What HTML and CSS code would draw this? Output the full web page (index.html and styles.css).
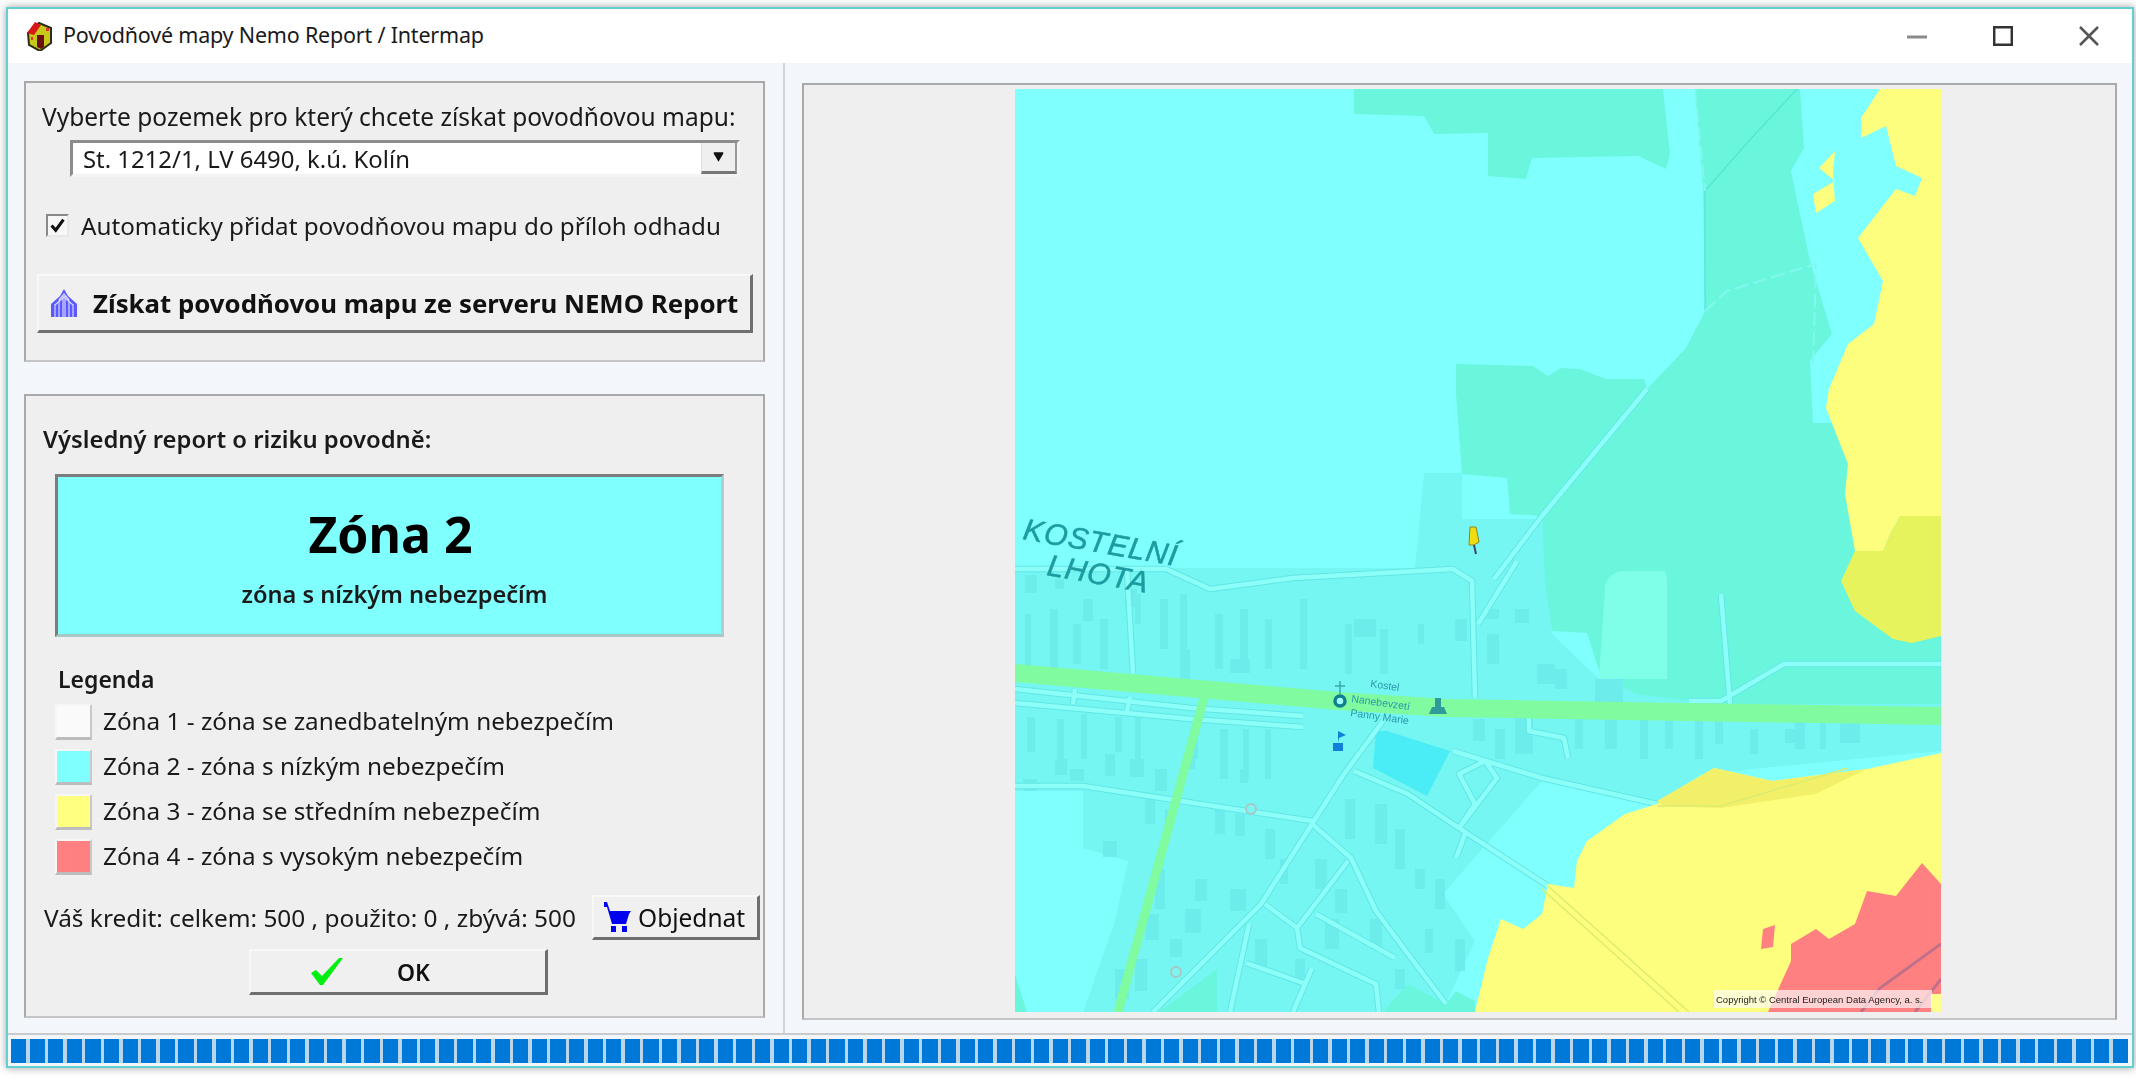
FILE: index.html
```html
<!DOCTYPE html>
<html lang="cs">
<head>
<meta charset="utf-8">
<title>Povodňové mapy Nemo Report / Intermap</title>
<link rel="stylesheet" href="styles.css">
</head>
<body>
<div class="window">
  <header class="titlebar">
    <svg class="app-icon" viewBox="0 0 28 30"><path class="i-body" d="M3 12 14 2l12 5v15l-11 8-11-6z"/><path class="i-roof" d="M2 12 10 1l6 3-7 10z"/><path class="i-door" d="M12 14h7v12l-3 2-4-2z"/><path class="i-spot" d="M21 7h3v3h-3zM6 16h2v3H6z"/></svg>
    <span class="title-text">Povodňové mapy Nemo Report / Intermap</span>
    <div class="controls">
      <span class="ctrl"><svg viewBox="0 0 20 20"><path class="c-min" d="M0 11h20"/></svg></span>
      <span class="ctrl"><svg viewBox="0 0 20 20"><path class="c-max" d="M1.200 1.200h17.600v17.600H1.200z"/></svg></span>
      <span class="ctrl"><svg viewBox="0 0 20 20"><path class="c-close" d="M1 1l18 18M19 1 1 19"/></svg></span>
    </div>
  </header>

  <main class="body">
    <div class="left">
      <section class="panel panel-select">
        <div class="select-label">Vyberte pozemek pro který chcete získat povodňovou mapu:</div>
        <div class="combo">
          <span class="combo-text">St. 1212/1, LV 6490, k.ú. Kolín</span>
          <span class="combo-btn"><svg viewBox="0 0 14 14"><path d="M1 1h12v2L7 13 1 3z"/></svg></span>
        </div>
        <label class="check-row">
          <span class="checkbox"><svg viewBox="0 0 16 16"><path d="M3 8l3.500 4L13 3"/></svg></span>
          <span class="check-text">Automaticky přidat povodňovou mapu do příloh odhadu</span>
        </label>
        <button class="btn btn-get">
          <svg class="get-icon" viewBox="0 0 28 28"><path class="g-fill" d="M14 0 18 7l9 8v13H1V15l9-8z"/><path class="g-line" d="M5 28V15M9 28V11M13 28V7M15 28V7M19 28V11M23 28V15M9 11l5-6 5 6M5 16l9-8 9 8"/></svg>
          <span>Získat povodňovou mapu ze serveru NEMO Report</span>
        </button>
      </section>

      <section class="panel panel-result">
        <div class="result-label">Výsledný report o riziku povodně:</div>
        <div class="zone-box">
          <div class="zone-title">Zóna 2</div>
          <div class="zone-sub">zóna s nízkým nebezpečím</div>
        </div>
        <div class="legend-title">Legenda</div>
        <ul class="legend">
          <li><span class="swatch z1"></span><span class="legend-text">Zóna 1 - zóna se zanedbatelným nebezpečím</span></li>
          <li><span class="swatch z2"></span><span class="legend-text">Zóna 2 - zóna s nízkým nebezpečím</span></li>
          <li><span class="swatch z3"></span><span class="legend-text">Zóna 3 - zóna se středním nebezpečím</span></li>
          <li><span class="swatch z4"></span><span class="legend-text">Zóna 4 - zóna s vysokým nebezpečím</span></li>
        </ul>
        <div class="credit-row">
          <span class="credit">Váš kredit: celkem: 500 , použito: 0 , zbývá: 500</span>
          <button class="btn btn-order">
            <svg class="cart" viewBox="0 0 28 30"><path class="cart-fill" d="M1 0h3l3 9h21l-2 3-3 10H9L4 5H1zM8 24h5v6H8zM19 24h5v6h-5z"/></svg>
            <span>Objednat</span>
          </button>
        </div>
        <button class="btn btn-ok">
          <svg class="ok-icon" viewBox="0 0 32 27"><path d="M0 15l5-3 6 6L28 0h4L12 27h-3z"/></svg>
          <span>OK</span>
        </button>
      </section>
    </div>

    <div class="right">
      <section class="panel panel-map">
        <svg class="map" viewBox="0 0 926 923" aria-label="Povodňová mapa">
          <defs>
            <g id="roads">
              <path d="M0 600 176 619 288 627M0 614 176 630 288 638M0 697H68L297 732M368 632 329 685 297 735 246 815 138 923M339 682 393 705 444 739 533 797M297 735 336 769 361 822 393 865 431 915M333 772 282 839 250 815M282 839 285 859 361 895 364 923M301 825 380 869M234 835 215 923M297 879 278 923M231 874 291 895"/>
              <path d="M444 739 482 689 470 672 444 685 460 715 444 739M450 745 441 769M0 480H151L195 500 278 489 438 480 457 492 460 609M463 535 502 472M706 505 715 615M674 612H706L769 575H926M514 629V642L549 649 553 669M438 662 527 689 642 715M60 600 58 615M115 608 112 622M112 480 118 585"/>
              <path d="M479 490 527 427 632 300"/>
            </g>
          </defs>
          <rect class="m-base" width="926" height="923"/>
          <path class="m-urban" d="M0 479H400L409 384H447V430H527L533 492 537 545 584 590H926V662L686 685 642 715 527 692 428 805 460 852 432 912 432 923H68L100 832 113 772 68 759V702H0z"/>
          <path class="m-green" d="M339 0V25L409 27 419 45 473 44V87L511 90 517 69 623 67 651 80 655 65 648 0z"/>
          <path class="m-green" d="M680 0H785L789 59 776 82 795 172 817 245 795 272 798 334H814L926 330V615H700L620 605 584 582 572 544 537 542 530 492 527 427 632 300 671 259 690 222 688 100z"/>
          <path class="m-green" d="M441 275 518 277 533 287 546 279 565 280 591 290 629 290 632 300 527 427 495 425 492 389 447 385 441 305z"/>
          <path class="m-green" d="M144 923 202 880V923zM368 923 393 895 431 915 441 902 460 912V923zM0 885 12 923H0z"/>
          <path class="m-pale" d="M590 500C590 488 600 482 610 482H648C652 482 652 490 652 500V590H584z"/>
          <path class="m-bld" d="M10 486h12v18H10zM40 490h9v10h-9zM68 510h10v22H68zM110 500h12v18h-12zM10 525h6v60h-6zM35 520h8v60h-8zM58 535h8v40h-8zM85 530h8v50h-8zM120 505h6v30h-6zM145 510h8v50h-8zM165 505h7v70h-7zM200 525h8v55h-8zM225 520h8v60h-8zM250 530h7v50h-7zM285 510h7v70h-7zM330 535h7v50h-7zM365 540h8v45h-8zM339 530h22v18h-22zM403 535h6v20h-6zM440 530h12v22h-12zM470 520h14v10h-14zM472 545h12v30h-12zM500 520h14v14h-14zM522 575h18v20h-18zM540 580h12v20h-12zM580 590h28v25h-28zM215 570h20v14h-20zM165 560h10v30h-10z"/>
          <path class="m-bld" d="M12 628h8v35h-8zM42 630h7v40h-7zM66 625h6v45h-6zM100 628h7v35h-7zM120 628h6v50h-6zM175 640h8v30h-8zM205 640h8v50h-8zM228 640h6v50h-6zM250 640h6v50h-6zM40 670h12v16H40zM90 665h10v22H90zM115 670h14v18h-14zM8 690h14v12H8zM55 680h14v12H55zM140 680h12v22h-12zM170 660h10v20h-10zM225 680h8v14h-8zM458 630h12v22h-12zM480 640h10v30h-10zM500 625h18v40h-18zM560 630h8v30h-8zM590 630h12v30h-12zM625 630h8v40h-8zM650 630h8v30h-8zM680 630h8v40h-8zM700 625h8v30h-8zM770 640h16v14h-16zM825 632h20v22h-20zM735 640h8v25h-8zM780 625h10v35h-10zM805 630h6v30h-6z"/>
          <path class="m-bld" d="M88 752h14v16H88zM130 705h10v30h-10zM150 720h8v18h-8zM200 720h10v25h-10zM220 725h10v22h-10zM250 740h10v30h-10zM265 770h8v25h-8zM330 710h10v40h-10zM360 715h12v40h-12zM380 740h10v40h-10zM420 790h10v30h-10zM410 840h8v24h-8zM440 850h10v32h-10zM400 780h10v20h-10zM300 770h12v30h-12zM310 830h14v30h-14zM320 800h12v24h-12zM140 780h10v40h-10zM130 825h14v26h-14zM155 850h12v18h-12zM120 870h12v32h-12zM100 880h14v30h-14zM170 820h16v24h-16zM215 800h16v22h-16zM180 790h12v22h-12zM240 850h12v30h-12zM280 870h10v26h-10zM355 830h12v30h-12zM380 880h10v20h-10z"/>
          <path class="m-pond" d="M361 642 372 642 435 662 412 707 358 679z"/>
          <path class="m-yel-d" d="M926 427H885L875 445 868 462H840L826 492 840 522 878 550 897 554 926 547z"/>
          <path class="m-yel" d="M865 0 846 29 846 49 871 37 881 77 907 89 900 107 881 100 843 149 868 192 859 235 833 255 814 300 811 319 833 375 830 405 840 462H868L875 445 885 427H926V0z"/>
          <path class="m-yel" d="M820 62 804 79 820 92 798 105 801 124 820 112 818 85z"/>
          <use href="#roads" class="road-edge"/>
          <use href="#roads" class="road-fill"/>
          <path class="m-yel" d="M926 664 852 680 757 692 699 679 642 715 610 725 572 752 562 772 559 799 533 795 527 825 508 840 486 830 473 869 460 923H926z"/>
          <path class="m-yel-o" d="M642 712 699 679 757 692 852 680 800 705 706 719 648 717z"/>
          <path class="m-red" d="M753 923 776 872 776 855 801 840 814 850 840 835 852 802 881 807 907 774 926 795V923zM748 840 760 836 758 858 746 860z"/>
          <path class="m-corner" d="M916 905h10v18h-10z"/>
          <path class="m-yline" d="M533 797 674 923M527 800 664 923M642 717H706L833 679"/>
          <path class="m-dark" d="M926 855 865 899 846 923M926 890 900 923"/>
          <g class="m-main">
            <path d="M189 609 103 923"/>
            <path class="r-big" d="M0 584 323 612 431 619 926 627"/>
          </g>
          <path class="m-thin" d="M782 0 731 55 690 102V222"/>
          <path class="m-dash" d="M680 0 690 102M690 222 712 202 801 175 798 280"/>
          <text class="m-town" transform="translate(7 450) rotate(10)">KOSTELNÍ</text>
          <text class="m-town" transform="translate(31 486) rotate(10)">LHOTA</text>
          <text class="m-poi" transform="translate(355 598) rotate(8)">Kostel</text>
          <text class="m-poi" transform="translate(336 613) rotate(8)">Nanebevzetí</text>
          <text class="m-poi" transform="translate(335 627) rotate(8)">Panny Marie</text>
          <circle class="m-ring" cx="325" cy="612" r="5"/>
          <path class="m-cross" d="M325 592V605M320 597H330"/>
          <path class="m-statue" d="M414 625h18l-3-7h-3v-9h-6v9h-3z"/>
          <path class="m-flag" d="M318 654h10v8h-10zM323 654v-12l8 4-7 3"/>
          <path class="m-pin" d="M455 438h6l3 15-5 3h-5z"/>
          <path class="m-pinstem" d="M459 456 461 465"/>
          <circle class="m-node" cx="236" cy="720" r="5"/>
          <circle class="m-node" cx="161" cy="883" r="5"/>
          <rect class="m-copy-bg" x="699" y="901" width="218" height="18"/>
          <text class="m-copy" x="701" y="914">Copyright © Central European Data Agency, a. s.</text>
        </svg>
      </section>
    </div>
  </main>

  <footer class="status"><div class="progress"></div></footer>
</div>
</body>
</html>
```

FILE: styles.css
```css
* { box-sizing: border-box; }
html, body { margin: 0; height: 100%; }
body {
  background: #fff;
  overflow: hidden;
  font-family: "Noto Sans", sans-serif;
  color: #1a1a1a;
}
.window {
  margin: 7px 2px 0 6px;
  height: 1061px;
  border: 2px solid #62d0d0;
  background: #f3f6fb;
  display: flex;
  flex-direction: column;
  box-shadow: 0 0 8px rgba(0, 0, 0, .38);
  filter: blur(.7px);
}
.titlebar {
  height: 54px;
  flex: none;
  background: #fff;
  display: flex;
  align-items: center;
  padding-left: 17px;
}
.app-icon { width: 28px; height: 30px; margin-top: -1px; }
.i-body { fill: #c8c818; stroke: #2c2c18; stroke-width: 2; }
.i-roof { fill: #d81818; }
.i-door { fill: #6a1010; }
.i-spot { fill: #e03030; }
.title-text { margin: -3px 0 0 10px; font-size: 21.500px; letter-spacing: -.2px; }
.controls { margin-left: auto; display: flex; }
.ctrl { width: 86px; display: flex; justify-content: center; }
.ctrl svg { width: 20px; height: 20px; fill: none; }
.c-min { stroke: #8a8a8a; stroke-width: 3; }
.c-max { stroke: #333; stroke-width: 2.500; }
.c-close { stroke: #555; stroke-width: 2.500; }

.body { flex: 1; display: flex; min-height: 0; }
.left {
  width: 777px;
  flex: none;
  padding: 18px 18px 0 16px;
  border-right: 2px solid #cfd2d6;
}
.right { flex: 1; padding: 20px 15px 0 17px; }

.panel {
  background: #efefef;
  border: 2px solid #a9a9a9;
  border-bottom-color: #c4c4c4;
}
.panel-select { height: 281px; padding: 19px 0 0 11px; }
.select-label { margin-left: 5px; height: 30px; line-height: 30px; font-size: 24.500px; white-space: nowrap; }
.combo {
  margin: 8px 0 0 33px;
  width: 670px;
  height: 37px;
  background: #fff;
  border: 3px solid;
  border-color: #8c8c8c #f4f4f4 #f4f4f4 #8c8c8c;
  display: flex;
  align-items: center;
  padding-left: 10px;
}
.combo-text { font-size: 23.900px; white-space: nowrap; }
.combo-btn {
  margin-left: auto;
  width: 36px;
  height: 31px;
  background: #efefef;
  border-left: 1px solid #e0e0e0;
  border-bottom: 3px solid #777;
  border-right: 2px solid #999;
  display: flex;
  align-items: center;
  justify-content: center;
}
.combo-btn svg { width: 11px; height: 12px; fill: #111; }
.check-row { margin: 37px 0 0 9px; display: flex; align-items: center; height: 23px; }
.checkbox {
  width: 23px;
  height: 23px;
  flex: none;
  background: #f8f8f8;
  border: 2px solid;
  border-color: #8a8a8a #e8e8e8 #e8e8e8 #8a8a8a;
  display: flex;
}
.checkbox svg { width: 100%; height: 100%; fill: none; stroke: #111; stroke-width: 2.600; }
.check-text { margin-left: 12px; font-size: 24.200px; white-space: nowrap; }

.btn {
  display: flex;
  align-items: center;
  background: #f0f0f0;
  border: 2px solid;
  border-color: #f8f8f8 #6f6f6f #6f6f6f #f8f8f8;
  border-width: 2px 3px 3px 2px;
  font-family: inherit;
  color: #111;
  padding: 0;
  white-space: nowrap;
}
.btn-get { margin-top: 37px; width: 716px; height: 59px; padding-left: 11px; font-size: 25.800px; font-weight: 700; }
.get-icon { width: 28px; height: 28px; flex: none; }
.g-fill { fill: #5a5aff; }
.g-line { fill: none; stroke: #d8d8ff; stroke-width: 1.200; }
.btn-get span { margin-left: 15px; }

.panel-result { margin-top: 32px; height: 624px; padding: 28px 3px 0 17px; }
.result-label { height: 30px; line-height: 30px; font-size: 23.800px; font-weight: 600; white-space: nowrap; }
.zone-box {
  margin: 20px 0 0 12px;
  width: 669px;
  height: 163px;
  background: #80ffff;
  border: 3px solid;
  border-color: #7c7c7c #b4cccc #a8c8c8 #7c7c7c;
  padding-top: 27px;
  text-align: center;
}
.zone-title { height: 60px; line-height: 60px; font-size: 50px; font-weight: 700; color: #000; padding-left: 2px; }
.zone-sub { margin-top: 15px; height: 30px; line-height: 30px; font-size: 23.600px; font-weight: 600; padding-left: 10px; }
.legend-title { margin: 27px 0 0 15px; height: 30px; line-height: 30px; font-size: 23px; font-weight: 600; }
.legend { list-style: none; margin: 10px 0 0 12px; padding: 0; }
.legend li { display: flex; align-items: center; height: 36px; margin-bottom: 9px; font-size: 24.300px; white-space: nowrap; }
.legend-text { margin-top: -3px; }
.swatch {
  width: 37px;
  height: 36px;
  flex: none;
  margin-right: 11px;
  border: 2px solid #f6f6f6;
  border-right-color: #c8c8c8;
  border-bottom: 3px solid #bcbcbc;
}
.z1 { background: #fafafa; }
.z2 { background: #80ffff; }
.z3 { background: #ffff80; }
.z4 { background: #ff8080; }
.credit-row { margin-top: 20px; display: flex; align-items: center; height: 45px; }
.credit { margin-left: 1px; font-size: 24.400px; white-space: nowrap; }
.btn-order {
  margin-left: auto;
  width: 168px;
  height: 45px;
  flex: none;
  padding-left: 9px;
  font-size: 24.500px;
}
.cart { width: 28px; height: 30px; flex: none; }
.cart-fill { fill: #0000f0; }
.btn-order span { margin-left: 7px; }
.btn-ok { margin: 9px 0 0 206px; width: 299px; height: 46px; padding-left: 60px; font-size: 23px; font-weight: 600; }
.ok-icon { width: 32px; height: 27px; fill: #00ee10; flex: none; }
.btn-ok span { margin-left: 54px; }

.panel-map { height: 937px; padding: 4px 0 0 211px; }
.map { display: block; width: 926px; height: 923px; filter: blur(.7px); }
.m-base { fill: #80ffff; }
.m-urban { fill: #75f6f2; }
.m-green { fill: #6af6dc; }
.m-pale { fill: #80ffe8; }
.m-bld { fill: #6decec; }
.m-pond { fill: #4aedf6; }
.m-yel { fill: #fdfd7e; }
.m-yel-d { fill: #e6f35c; }
.m-yel-o { fill: #f2f068; }
.m-red { fill: #ff8080; }
.m-corner { fill: #ffff90; }
.road-edge { fill: none; stroke: #62e6e6; stroke-width: 6.500; stroke-linejoin: round; }
.road-fill { fill: none; stroke: #8cfff8; stroke-width: 4.500; stroke-linejoin: round; }
.m-yline { fill: none; stroke: #dcec70; stroke-width: 1.500; }
.m-dark { fill: none; stroke: #c07088; stroke-width: 3; }
.m-main path { fill: none; stroke: #80fba0; stroke-width: 9; }
.m-main .r-big { stroke-width: 18; }
.m-thin { fill: none; stroke: #55e4d4; stroke-width: 1.200; }
.m-dash { fill: none; stroke: #80f8f0; stroke-width: 2; stroke-dasharray: 14 5; }
.m-town { font-family: "Liberation Sans", sans-serif; font-size: 30px; font-style: italic; letter-spacing: 1px; fill: #1c9ca0; stroke: #1c9ca0; stroke-width: .5px; }
.m-poi { font-family: "Liberation Sans", sans-serif; font-size: 10.500px; fill: #2a9aa8; }
.m-ring { fill: #a0fff8; stroke: #107f90; stroke-width: 3.500; }
.m-cross { fill: none; stroke: #3aa8b0; stroke-width: 1.500; }
.m-statue { fill: #2f9a9a; }
.m-flag { fill: #1080d8; }
.m-pin { fill: #f0dc10; stroke: #8a8a20; stroke-width: 1; }
.m-pinstem { fill: none; stroke: #446; stroke-width: 2; }
.m-node { fill: #80f4f0; stroke: #a8c8c8; stroke-width: 2; }
.m-copy-bg { fill: #fff; opacity: .65; }
.m-copy { font-family: "Liberation Sans", sans-serif; font-size: 9.500px; fill: #222; }

.status {
  height: 33px;
  flex: none;
  border-top: 2px solid #c8cacc;
  padding: 4px 4px 0 3px;
}
.progress {
  height: 24px;
  background: repeating-linear-gradient(90deg, #0078d7 0, #0078d7 15.200px, #b9d6ee 15.200px, #b9d6ee 18.600px);
}
```
